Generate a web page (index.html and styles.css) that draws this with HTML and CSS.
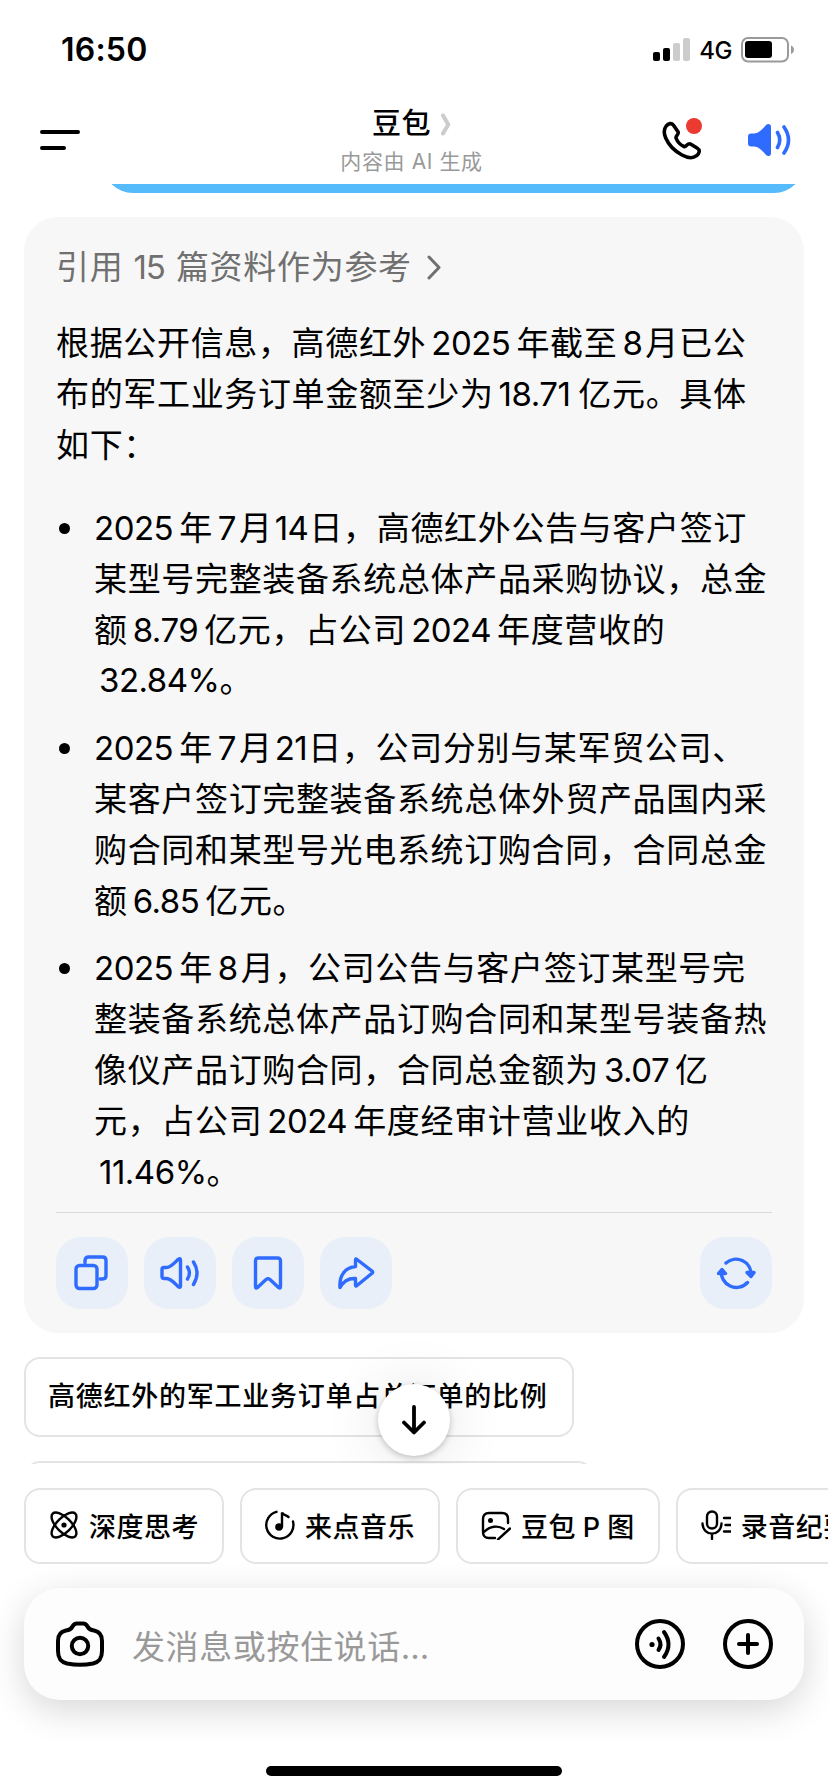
FILE: index.html
```html
<!DOCTYPE html>
<html lang="zh-CN">
<head>
  <meta charset="UTF-8" />
  <meta name="viewport" content="width=device-width, initial-scale=1.0"/>
  <title>豆包</title>
  <link rel="stylesheet" href="styles.css">
</head>
<body>
  <div class="screen">

    <!-- Status bar -->
    <div class="status-bar">
      <span class="time">16:50</span>
      <div class="status-right">
        <svg width="38" height="24" viewBox="0 0 38 24">
          <rect x="0" y="14" width="7" height="9" rx="2"/>
          <rect x="10" y="10" width="7" height="13" rx="2"/>
          <rect x="20" y="5" width="7" height="18" rx="2" fill="#ccc"/>
          <rect x="30" y="0" width="7" height="23" rx="2" fill="#ccc"/>
        </svg>
        <span class="network">4G</span>
        <svg class="battery" width="54" height="26" viewBox="0 0 54 26">
          <rect x="1" y="1" width="46" height="23.5" rx="6" fill="none" stroke="#9a9a9a" stroke-width="2"/>
          <rect x="4" y="4" width="27" height="17" rx="3"/>
          <path d="M50 8.5c4 1.500 4 7 0 8.500z" fill="#9a9a9a"/>
        </svg>
      </div>
    </div>

    <!-- Navigation -->
    <header class="nav">
      <svg class="menu" width="40" height="22" viewBox="0 0 40 22" stroke="#000" stroke-width="4" stroke-linecap="round">
        <path d="M2 3h36M2 19h22"/>
      </svg>
      <div class="nav-title">
        <h1>豆包<svg width="10" height="23" viewBox="0 0 10 23" fill="none" stroke="#ccc" stroke-width="4" stroke-linecap="round" stroke-linejoin="round"><path d="M2 2.500l5.300 9L2 20.500"/></svg></h1>
        <p>内容由 AI 生成</p>
      </div>
      <div class="nav-actions">
        <div class="call">
          <svg width="42" height="42" viewBox="0 0 42 42" fill="none" stroke="#000" stroke-width="3.600" stroke-linejoin="round">
            <path d="M5.200 7C7.500 4.300 10.500 3.700 12.300 6L17 12.700C18.500 15 14.300 17 15 19C16.500 23 19.500 26 23 27.500C25.300 28.400 26.500 23.500 29.500 25L36 29C39.500 31 38.500 34.500 35.500 36.700C32.500 39.200 27 39.300 21 36C13.500 32 7.500 25.500 4.700 19C2.800 14.500 2.800 10 5.200 7Z"/>
          </svg>
          <span class="dot"></span>
        </div>
        <svg width="44" height="36" viewBox="0 0 44 36" fill="none" stroke="#2f6bff" stroke-width="3.600" stroke-linecap="round">
          <path d="M4 11.500h3c5 0 9-5 12-8.500 2-2 5-1 5 1.500v27c0 2.500-3 3.500-5 1.500-3-3.500-7-8.500-12-8.500H4q-3 0-3-3v-7q0-3 3-3z" fill="#2f6bff" stroke="none"/>
          <path d="M30.500 10.500q4.500 7.500 0 15M37 5q9 13 0 26"/>
        </svg>
      </div>
    </header>

    <!-- Chat -->
    <main class="chat">
      <div class="my-message"></div>

      <article class="answer">
        <div class="refs">
          <span>引用<span class="refs-num">15</span>篇资料作为参考</span>
          <svg width="14" height="25" viewBox="0 0 14 25" fill="none" stroke="#707070" stroke-width="3" stroke-linecap="round" stroke-linejoin="round"><path d="M2 2l10 10.500L2 23"/></svg>
        </div>

        <p class="summary">根据公开信息，高德红外<span class="num">2025</span>年截至<span class="num narrow">8</span>月已公<br>布的军工业务订单金额至少为<span class="num wide">18.71</span>亿元。具体<br>如下：</p>

        <ul>
          <li><span class="num">2025</span>年<span class="num narrow">7</span>月<span class="num tight">14</span>日，高德红外公告与客户签订<br>某型号完整装备系统总体产品采购协议，总金<br>额<span class="num">8.79</span>亿元，占公司<span class="num">2024</span>年度营收的<br><span class="num wrapped">32.84%</span>。</li>
          <li><span class="num">2025</span>年<span class="num narrow">7</span>月<span class="num tight">21</span>日，公司分别与某军贸公司、<br>某客户签订完整装备系统总体外贸产品国内采<br>购合同和某型号光电系统订购合同，合同总金<br>额<span class="num">6.85</span>亿元。</li>
          <li><span class="num">2025</span>年<span class="num narrow">8</span>月，公司公告与客户签订某型号完<br>整装备系统总体产品订购合同和某型号装备热<br>像仪产品订购合同，合同总金额为<span class="num">3.07</span>亿<br>元，占公司<span class="num">2024</span>年度经审计营业收入的<br><span class="num wrapped">11.46%</span>。</li>
        </ul>

        <div class="actions">
          <button>
            <svg width="40" height="40" viewBox="0 0 40 40"><path d="M13 10V7.500Q13 4 16.500 4H30.500Q34 4 34 7.500V22.500Q34 26 30.500 26H28"/><rect x="4" y="12.500" width="21" height="23" rx="3.500"/></svg>
          </button>
          <button>
            <svg width="40" height="40" viewBox="0 0 40 40"><path d="M4 14.500h2.500C11 14.500 15 9.500 18 6.500q2.500-2 2.500.5v26q0 2.500-2.500.5C15 30.500 11 25.500 6.500 25.500H4q-2 0-2-2v-7q0-2 2-2zM27.500 14q3.800 6 0 12M33.500 9q7 11 0 22.500"/></svg>
          </button>
          <button>
            <svg width="40" height="40" viewBox="0 0 40 40"><path d="M10.500 5h19q3 0 3 3v25.500q0 2.500-2 1L22 26.500q-2-1.500-4 0l-8.500 8q-2 1.500-2-1V8q0-3 3-3z"/></svg>
          </button>
          <button>
            <svg width="40" height="40" viewBox="0 0 40 40"><path d="M19.500 7q0-2 1.500-.5L36 18q1.500 1.200 0 2.300L21 32.500q-1.500 1.500-1.500-.5v-6.500C12 25 7.500 28 4 34.500 3 22 9.500 14.500 19.500 13.500z"/></svg>
          </button>
          <button class="retry">
            <svg width="40" height="40" viewBox="0 0 40 40"><path d="M10 10A15 15 0 0 1 35 21.500M31.500 29.500A15 15 0 0 1 5.500 17.500"/><path d="M31 19.500L35 23.500L38 19.500ZM2.500 20.500L6 16.500L9.500 20.500Z" fill="#2f6bff"/></svg>
          </button>
        </div>
      </article>

      <div class="suggestion">高德红外的军工业务订单占总订单的比例</div>
      <div class="suggestion next"></div>

      <button class="to-bottom">
        <svg width="28" height="30" viewBox="0 0 28 30" fill="none" stroke="#000" stroke-width="3.800" stroke-linecap="round" stroke-linejoin="round"><path d="M14 2v25M4 17.500l10 10 10-10"/></svg>
      </button>
    </main>

    <!-- Shortcuts -->
    <div class="chips">
      <div class="chip">
        <svg width="30" height="30" viewBox="0 0 30 30"><ellipse cx="15" cy="15" rx="16" ry="7.200" transform="rotate(45 15 15)"/><ellipse cx="15" cy="15" rx="16" ry="7.200" transform="rotate(-45 15 15)"/><circle cx="15" cy="15" r="2.600" fill="#000" stroke="none"/></svg>
        <span>深度思考</span>
      </div>
      <div class="chip">
        <svg width="30" height="30" viewBox="0 0 30 30"><path d="M11.500 1.800A13.600 13.600 0 1 0 28 11.500"/><circle cx="14" cy="17" r="3.800" fill="#000" stroke="none"/><path d="M17 17V2.500c1.500 3 4 2.500 6.500 4.500"/></svg>
        <span>来点音乐</span>
      </div>
      <div class="chip">
        <svg width="30" height="30" viewBox="0 0 30 30"><path d="M14 28H8Q2 28 2 22V9Q2 3 8 3H21Q27 3 27 9V13M3 22C9 16 17 15 23 19M17 29.500L29 18.500"/><circle cx="9.500" cy="10.500" r="2.500" fill="#000" stroke="none"/></svg>
        <span>豆包 P 图</span>
      </div>
      <div class="chip">
        <svg width="30" height="30" viewBox="0 0 30 30"><rect x="6" y="1.500" width="10" height="17" rx="5"/><path d="M1.500 13.500C2 27 20 27 20.500 13.500M11 24v5M23 8h6.500M24.500 15h5M23 21.500h6.500"/></svg>
        <span>录音纪要</span>
      </div>
    </div>

    <!-- Message input -->
    <div class="composer">
      <svg width="48" height="46" viewBox="0 0 48 46" fill="none" stroke="#000" stroke-width="4">
        <path d="M16.500 5.500Q18 2.500 21 2.500H27Q30 2.500 31.500 5.500C33 8.500 34.500 9 38 9.500C44 10.500 46 14 46 20V30C46 38 43 41 37 42.500Q24 45 11 42.500C5 41 2 38 2 30V20C2 14 4 10.500 10 9.500C13.500 9 15 8.500 16.500 5.500Z" stroke-linejoin="round"/>
        <circle cx="24" cy="25" r="8.200"/>
      </svg>
      <span class="placeholder">发消息或按住说话<span class="dots">...</span></span>
      <svg class="voice" width="50" height="50" viewBox="0 0 50 50" fill="none" stroke="#000" stroke-width="4" stroke-linecap="round">
        <circle cx="25" cy="25" r="23"/>
        <circle cx="17" cy="25.500" r="2.600" fill="#000" stroke="none"/>
        <path d="M23.500 19.500q4 6 0 11.500M29 13q9 12.500 0 25"/>
      </svg>
      <svg width="50" height="50" viewBox="0 0 50 50" fill="none" stroke="#000" stroke-width="4" stroke-linecap="round">
        <circle cx="25" cy="25" r="23"/>
        <path d="M16 25h18M25 16v18"/>
      </svg>
    </div>

    <div class="home-bar"></div>
  </div>
</body>
</html>
```

FILE: styles.css
```css
* {
  box-sizing: border-box;
  margin: 0;
  padding: 0;
}
body {
  font-family: Inter, "Noto Sans CJK SC", sans-serif;
  color: #000;
  background: #fff;
}
svg {
  display: block;
  flex-shrink: 0;
}
button {
  border: none;
  cursor: pointer;
}
.screen {
  width: 828px;
  height: 1792px;
  overflow: hidden;
  display: flex;
  flex-direction: column;
  background: #fff;
}

/* status bar */
.status-bar {
  height: 98px;
  padding: 1px 33px 0 61px;
  display: flex;
  justify-content: space-between;
  align-items: center;
}
.time {
  font-size: 32px;
  font-weight: 600;
  letter-spacing: 0.2px;
}
.status-right {
  display: flex;
  align-items: center;
}
.network {
  margin: 2px 9px 0 8px;
  font-size: 24px;
  font-weight: 500;
  letter-spacing: -0.5px;
}

/* navigation */
.nav {
  height: 86px;
  padding: 0 37px 2px 40px;
  display: grid;
  grid-template-columns: 1fr auto 1fr;
  align-items: center;
}
.nav .menu {
  margin-top: 0;
}
.nav-title {
  text-align: center;
  margin-left: -8px;
}
.nav-title h1 {
  display: flex;
  align-items: center;
  justify-content: center;
  font-size: 29px;
  font-weight: 500;
  line-height: 44px;
  letter-spacing: 0.5px;
}
.nav-title h1 svg {
  margin-left: 10px;
}
.nav-title p {
  font-size: 21px;
  line-height: 32px;
  letter-spacing: 0.6px;
  color: #999;
}
.nav-actions {
  display: flex;
  justify-content: flex-end;
  align-items: center;
  gap: 44px;
}
.call {
  position: relative;
}
.call .dot {
  position: absolute;
  right: 1px;
  top: -1px;
  width: 16px;
  height: 16px;
  border-radius: 50%;
  background: #eb3a30;
}

/* chat */
.chat {
  position: relative;
  height: 1280px;
  padding: 0 24px;
  overflow: hidden;
}
.my-message {
  height: 60px;
  margin: -51px 0 24px 79px;
  border-radius: 34px;
  background: #56bbfa;
}
.answer {
  height: 1116px;
  padding: 25px 32px 24px;
  border-radius: 34px;
  background: #f7f7f7;
  display: flex;
  flex-direction: column;
}
.refs {
  display: flex;
  align-items: center;
  gap: 15px;
  font-size: 33px;
  line-height: 50px;
  letter-spacing: 0.7px;
  color: #707070;
}
.refs-num {
  margin: 0 11px 0 10px;
  letter-spacing: -1px;
}
.summary,
.answer li {
  font-size: 33px;
  line-height: 50.9px;
  letter-spacing: 0.66px;
  white-space: nowrap;
}
.summary {
  margin-top: 26px;
}
.num {
  margin: 0 6px 0 5px;
  line-height: 1;
  letter-spacing: -0.5px;
}
.num.narrow {
  margin: 0 3px 0 5px;
}
.num.tight {
  margin: 0 1px 0 2px;
}
.num.wide {
  margin-right: 8px;
}
.answer li > .num:first-child {
  margin-left: 0;
}
.num.wrapped {
  margin: 0 0 0 5px;
}
.answer ul {
  margin-top: 32px;
  list-style: none;
}
.answer li {
  position: relative;
  margin-bottom: 16.5px;
  padding-left: 38px;
}
.answer li:last-child {
  margin-bottom: 0;
}
.answer li::before {
  content: "";
  position: absolute;
  left: 3px;
  top: 20px;
  width: 11px;
  height: 11px;
  border-radius: 50%;
  background: #000;
}
.actions {
  margin-top: auto;
  padding-top: 24px;
  border-top: 1px solid #dadada;
  display: flex;
  gap: 16px;
}
.actions button {
  width: 72px;
  height: 72px;
  display: flex;
  align-items: center;
  justify-content: center;
  border-radius: 25px;
  background: #e8eff8;
}
.actions svg {
  fill: none;
  stroke: #2f6bff;
  stroke-width: 3.4;
  stroke-linecap: round;
  stroke-linejoin: round;
}
.actions .retry {
  margin-left: auto;
}
.suggestion {
  width: 550px;
  height: 80px;
  margin-top: 24px;
  padding-left: 22px;
  border: 2px solid #e4e4e4;
  border-radius: 16px;
  font-size: 27px;
  font-weight: 500;
  line-height: 75px;
  letter-spacing: 0.75px;
  white-space: nowrap;
}
.suggestion.next {
  width: 570px;
}
.to-bottom {
  position: absolute;
  left: 378px;
  top: 1200px;
  width: 72px;
  height: 72px;
  display: flex;
  align-items: center;
  justify-content: center;
  border-radius: 50%;
  background: #fff;
  box-shadow: 0 2px 6px rgba(0,0,0,0.22), 0 2px 60px rgba(0,0,0,0.12);
}

/* shortcuts */
.chips {
  padding: 24px 0 0 24px;
  display: flex;
  gap: 16px;
}
.chip {
  height: 76px;
  padding: 0 23px 2px;
  flex-shrink: 0;
  display: flex;
  align-items: center;
  gap: 10px;
  border: 2px solid #e4e4e4;
  border-radius: 16px;
  font-size: 27px;
  font-weight: 500;
  letter-spacing: 0.5px;
  word-spacing: -1px;
  white-space: nowrap;
}
.chip svg {
  fill: none;
  stroke: #000;
  stroke-width: 2.4;
  stroke-linecap: round;
}

/* message input */
.composer {
  height: 112px;
  margin: 24px 24px 0;
  padding: 0 31px 0 32px;
  display: flex;
  align-items: center;
  border-radius: 36px;
  background: #fdfdfd;
  box-shadow: 0 10px 36px rgba(0,0,0,0.16);
}
.placeholder {
  flex: 1;
  margin-left: 28px;
  padding-top: 2px;
  font-size: 33px;
  letter-spacing: 0.6px;
  color: #999;
}
.placeholder .dots {
  letter-spacing: 0;
}
.composer .voice {
  margin-right: 38px;
}
.home-bar {
  width: 296px;
  height: 10px;
  margin: 66px auto 0;
  border-radius: 5px;
  background: #000;
}
```
